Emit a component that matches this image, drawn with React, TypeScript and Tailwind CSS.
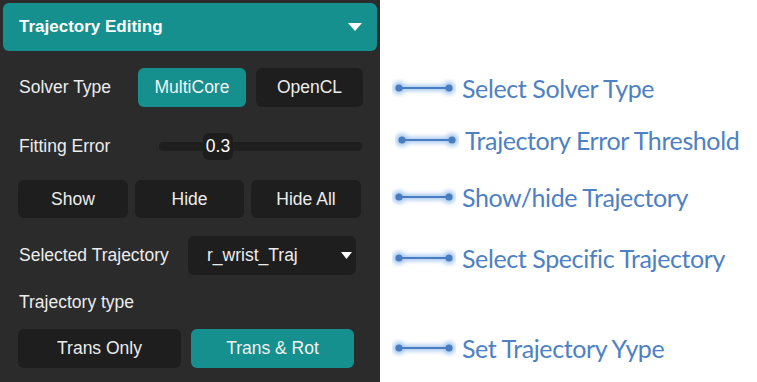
import React from "react";

const Connector = ({ shift = 0 }: { shift?: number }) => (
  <svg width="64" height="20" viewBox="0 0 64 20" style={{ marginLeft: shift }} className="shrink-0">
    <defs>
      <filter id="glow" x="-20%" y="-80%" width="140%" height="260%">
        <feGaussianBlur stdDeviation="2.2" />
      </filter>
    </defs>
    <g filter="url(#glow)" opacity="0.9">
      <line x1="7" y1="10" x2="57" y2="10" stroke="#9cc2ef" strokeWidth="6" />
      <circle cx="7" cy="10" r="6.5" fill="#9cc2ef" />
      <circle cx="57" cy="10" r="6.5" fill="#9cc2ef" />
    </g>
    <line x1="7" y1="10" x2="57" y2="10" stroke="#4a7dbf" strokeWidth="2.2" />
    <circle cx="7" cy="10" r="3.6" fill="#4a7dbf" />
    <circle cx="57" cy="10" r="3.6" fill="#4a7dbf" />
  </svg>
);

const Note = ({ text, className, shift }: { text: string; className: string; shift?: number }) => (
  <div className={`flex items-center gap-[6px] ${className}`}>
    <Connector shift={shift} />
    <span className="text-[25px] leading-none text-[#4d81c4] tracking-[-0.4px]" style={{ fontFamily: "Lato, 'Open Sans', sans-serif" }}>
      {text}
    </span>
  </div>
);

const DarkBtn = ({ label, w }: { label: string; w: string }) => (
  <div className={`${w} h-full flex items-center justify-center rounded-md bg-[#1e1e1e] text-[#ececec]`}>{label}</div>
);

const TealBtn = ({ label, w }: { label: string; w: string }) => (
  <div className={`${w} h-full flex items-center justify-center rounded-md bg-[#15908e] text-[#f2f2f2]`}>{label}</div>
);

export default function App() {
  return (
    <div className="w-[757px] h-[382px] bg-white flex" style={{ fontFamily: "'Liberation Sans', Arial, sans-serif" }}>
      <div className="w-[380px] h-full bg-[#2b2b2b] text-[17.5px] text-[#ececec] flex flex-col">
        <div className="mx-[3px] mt-[3px] h-[48px] rounded-md bg-[#15908e] flex items-center justify-between pl-[16px] pr-[15px]">
          <span className="text-[17px] font-bold text-white">Trajectory Editing</span>
          <svg width="14" height="8" viewBox="0 0 14 8">
            <path d="M0 0 H14 L7 8 Z" fill="#fff" />
          </svg>
        </div>

        <div className="mt-[17px] h-[39px] flex items-center pl-[19px]">
          <span className="w-[119px]">Solver Type</span>
          <TealBtn label="MultiCore" w="w-[108px]" />
          <div className="w-[10px]" />
          <DarkBtn label="OpenCL" w="w-[107px]" />
        </div>

        <div className="mt-[19px] h-[40px] flex items-center pl-[19px]">
          <span className="w-[140px]">Fitting Error</span>
          <div className="relative w-[203px] h-[9px] rounded-sm bg-[#1f1f1f]">
            <div className="absolute left-[44px] top-[-9px] w-[30px] h-[27px] rounded-md bg-[#1d1d1d] flex items-center justify-center text-[17.5px] text-white">
              0.3
            </div>
          </div>
        </div>

        <div className="mt-[14px] h-[38px] flex items-center pl-[18px] gap-[7px]">
          <DarkBtn label="Show" w="w-[110px]" />
          <DarkBtn label="Hide" w="w-[109px]" />
          <DarkBtn label="Hide All" w="w-[110px]" />
        </div>

        <div className="mt-[18px] h-[39px] flex items-center pl-[19px]">
          <span className="w-[169px]">Selected Trajectory</span>
          <div className="w-[168px] h-full rounded-md bg-[#1e1e1e] flex items-center justify-between pl-[19px] pr-[4px]">
            <span>r_wrist_Traj</span>
            <svg width="11" height="7" viewBox="0 0 11 7">
              <path d="M0 0 H11 L5.5 7 Z" fill="#fff" />
            </svg>
          </div>
        </div>

        <div className="mt-[10px] h-[34px] flex items-center pl-[19px]">Trajectory type</div>

        <div className="mt-[10px] h-[39px] flex items-center pl-[18px] gap-[10px]">
          <DarkBtn label="Trans Only" w="w-[163px]" />
          <TealBtn label="Trans & Rot" w="w-[163px]" />
        </div>
      </div>

      <div className="flex flex-col pl-[12px]">
        <Note text="Select Solver Type" className="mt-[78px] h-[20px]" />
        <Note text="Trajectory Error Threshold" className="mt-[32px] h-[20px]" shift={3} />
        <Note text="Show/hide Trajectory" className="mt-[37px] h-[20px]" />
        <Note text="Select Specific Trajectory" className="mt-[41px] h-[20px]" />
        <Note text="Set Trajectory Yype" className="mt-[70px] h-[20px]" />
      </div>
    </div>
  );
}
